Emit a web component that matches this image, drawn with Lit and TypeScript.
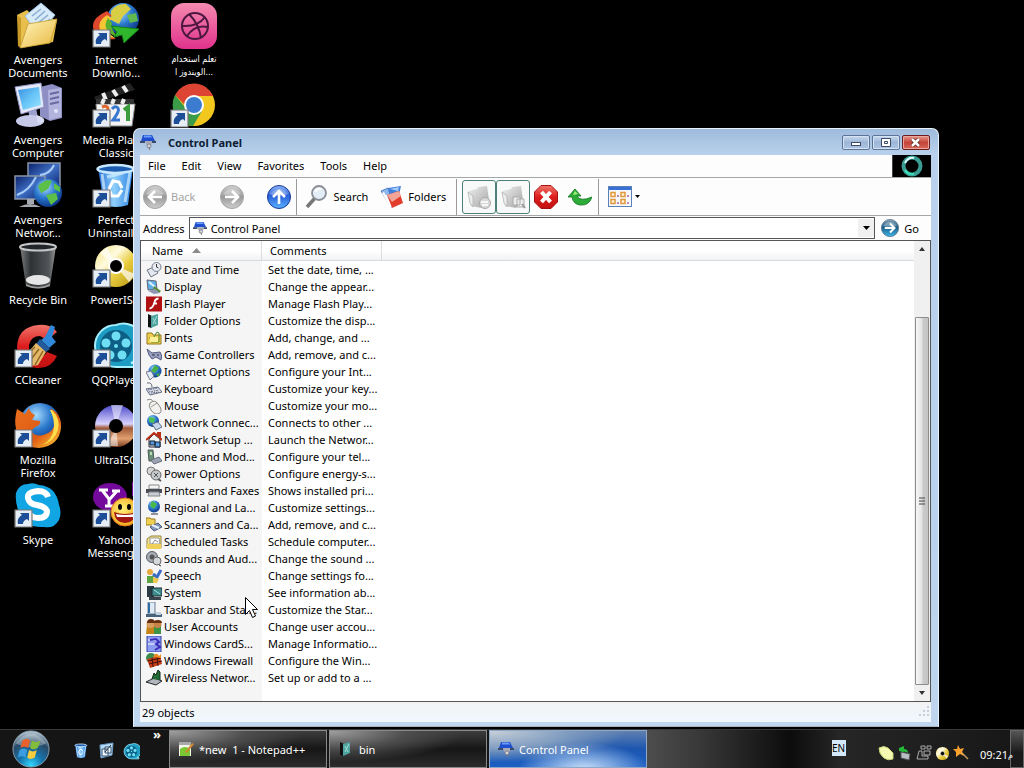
import { LitElement, html, svg, css, nothing } from "lit";
import { customElement } from "lit/decorators.js";

const defs = html`<svg class="defs" width="0" height="0" aria-hidden="true"><defs>
  <linearGradient id="gray" x2="0" y2="1"><stop stop-color="#d2d2d2"/><stop offset=".5" stop-color="#9a9a9a"/><stop offset="1" stop-color="#cecece"/></linearGradient>
  <linearGradient id="blue" x2="0" y2="1"><stop stop-color="#8fb6f8"/><stop offset=".45" stop-color="#2a5fd8"/><stop offset="1" stop-color="#59b4ff"/></linearGradient>
  <linearGradient id="teal" x2="0" y2="1"><stop stop-color="#8fa6b4"/><stop offset=".45" stop-color="#1b5e88"/><stop offset="1" stop-color="#3fb6e6"/></linearGradient>
  <linearGradient id="red" x2="0" y2="1"><stop stop-color="#f0756a"/><stop offset=".5" stop-color="#dd1d1d"/><stop offset="1" stop-color="#c01010"/></linearGradient>
  <linearGradient id="folder" x2="1" y2="1"><stop stop-color="#fff6c0"/><stop offset="1" stop-color="#e9b83e"/></linearGradient>
  <linearGradient id="paper" x2="1" y2="1"><stop stop-color="#f0f0f0"/><stop offset="1" stop-color="#a4a4a4"/></linearGradient>
  <linearGradient id="screen" x2="1" y2="1"><stop stop-color="#3d8fe0"/><stop offset=".5" stop-color="#66c4f6"/><stop offset="1" stop-color="#9be4ff"/></linearGradient>
  <linearGradient id="night" x2="1" y2="1"><stop stop-color="#0a1f66"/><stop offset=".5" stop-color="#3f6fc4"/><stop offset="1" stop-color="#0b2370"/></linearGradient>
  <linearGradient id="pink" x2="0" y2="1"><stop stop-color="#f58ab0"/><stop offset="1" stop-color="#e0328c"/></linearGradient>
  <linearGradient id="bin" x2="1"><stop stop-color="#8a8a8a"/><stop offset=".3" stop-color="#33373a"/><stop offset=".8" stop-color="#5a5e62"/><stop offset="1" stop-color="#a8a8a8"/></linearGradient>
  <linearGradient id="can" x2="1"><stop stop-color="#1e66d0"/><stop offset=".45" stop-color="#8fd0fc"/><stop offset="1" stop-color="#2c80e0"/></linearGradient>
  <linearGradient id="cd" x2="1" y2="1"><stop stop-color="#f6e27a"/><stop offset=".35" stop-color="#fffbe0"/><stop offset=".6" stop-color="#e8cc3c"/><stop offset="1" stop-color="#b09010"/></linearGradient>
  <linearGradient id="cd2" x2="0" y2="1"><stop stop-color="#4a48c8"/><stop offset=".45" stop-color="#d8d4ff"/><stop offset=".55" stop-color="#a05a38"/><stop offset=".8" stop-color="#e0a070"/><stop offset="1" stop-color="#7a3c20"/></linearGradient>
  <radialGradient id="globe" cx=".4" cy=".3" r=".75"><stop stop-color="#a8dcff"/><stop offset=".5" stop-color="#2a78cc"/><stop offset="1" stop-color="#0a2f80"/></radialGradient>
  <radialGradient id="orb" cx=".5" cy=".95" r=".95"><stop stop-color="#30d8ff"/><stop offset=".35" stop-color="#1673ac"/><stop offset=".7" stop-color="#2a4a66"/><stop offset="1" stop-color="#c0d0dc"/></radialGradient>
  <radialGradient id="sun" cx=".4" cy=".4" r=".7"><stop stop-color="#fff27a"/><stop offset="1" stop-color="#f0a010"/></radialGradient>
  <linearGradient id="fox" x2="1" y2="1"><stop stop-color="#e8701c"/><stop offset=".6" stop-color="#e05a14"/><stop offset="1" stop-color="#ffd83c"/></linearGradient>
</defs></svg>`;

const pic = (size: number, box: number, body: unknown) =>
  html`<svg width=${size} height=${size} viewBox="0 0 ${box} ${box}" aria-hidden="true">${body}</svg>`;

const shortcut = svg`<g><path d="M1 28h17v17H1z" fill="#e6edf4" stroke="#777" stroke-width="1.2"/><path d="M4 42c-1-5 1-7 4-9l-2-2h9v8l-2-2c-3 1-4 3-4 5z" fill="#1d4f98"/></g>`;

const reel = svg`<path d="M24 3a20 20 0 1 0 0 42h21v-4h-6A20 20 0 0 0 24 3z" fill="#1d9cc4" stroke="#a4f0ff" stroke-width="2"/><circle cx="24" cy="24" r="16" fill="#0e5f86"/><g fill="#6fe0f4"><circle cx="24" cy="14" r="4.5"/><circle cx="34" cy="21" r="4.5"/><circle cx="30" cy="33" r="4.5"/><circle cx="18" cy="33" r="4.5"/><circle cx="14" cy="21" r="4.5"/><circle cx="24" cy="24" r="2"/></g>`;

const trash = svg`<path d="M6 6h35l-5 37q-12 4-24 0z" fill="url(#can)"/><path d="M10 12l4 28M38 10l-5 30M15 15l16-4" stroke="#d4f0ff" stroke-width="3" fill="none" opacity=".7"/><ellipse cx="23.500" cy="7" rx="18" ry="4" fill="#1c5cb0" stroke="#c8e8ff" stroke-width="2.500"/><path d="M17 27l4-8 6 1 3 6M17 27l3 7h6l4-6" fill="none" stroke="#fff" stroke-width="3"/>`;

const panel = svg`<path d="M3 1h9l3 6H1z" fill="#1f4fd0"/><path d="M4 1.500h7l1 2H4z" fill="#6c9cf8"/><path d="M0 7h5v2H0zM12 7h4v2h-4z" fill="#3a4a68"/><path d="M5 7h7v3l-2 2H7z" fill="#a8aab4"/><circle cx="9" cy="12" r="2" fill="#d4d4dc" stroke="#6b6b7a" stroke-width=".7"/><path d="M9 13l1 3" stroke="#777"/>`;

const desk: Record<string, unknown> = {
  docs: svg`<path d="M3 13l10-5 4 4 26 6-4 22-32 6z" fill="#e8bf4c"/><path d="M11 14L27 1l14 12-16 20z" fill="#d7eaf9" stroke="#9abede"/><path d="M18 14l9-7M21 18l10-9M24 21l10-8M27 25l9-8" stroke="#86acd0" stroke-width="1.500"/><path d="M3 13l4 3 0 30-3-2z" fill="#c89a28"/><path d="M6 46l8-24 29-5-7 24z" fill="url(#folder)" stroke="#c49b30" stroke-width=".8"/>`,
  pc: svg`<path d="M26 5l12-3 10 4v30l-12 3-10-5z" fill="#8e8fc4"/><path d="M34 8l13-2v29l-12 3z" fill="#b3b4de"/><path d="M36 12l9-2M36 17l9-2M36 22l9-2" stroke="#686aa0" stroke-width="2"/><circle cx="42" cy="29" r="2" fill="#e0e2ff"/><path d="M14 28l8-2 2 10-8 1z" fill="#9ba0ce"/><ellipse cx="16" cy="39" rx="14" ry="6" fill="#c6cae8"/><path d="M22 33q10 2 8 7l-6 2z" fill="#d8dcf4"/><path d="M1 5l26-4 3 24-23 7z" fill="#e4e8f8" stroke="#9095c2"/><path d="M4 8l21-3 2 18-18 5z" fill="url(#screen)"/>`,
  net: svg`<path d="M14 1h32v24H14z" fill="url(#night)" stroke="#8a95a8" stroke-width="1.500"/><path d="M1 14h30v23H1z" fill="url(#night)" stroke="#8a95a8" stroke-width="1.500"/><path d="M3 33Q15 29 22 15M26 13Q36 12 40 3" stroke="#a9cdf8" stroke-width="2" fill="none"/><path d="M13 37h7v5H13zM5 45q11-6 22 0z" fill="#a5a9b0"/><circle cx="34" cy="31" r="14" fill="url(#globe)"/><path d="M24 24q8-8 14-5l-4 8-7 4zM32 33l10-2 2 6-7 6zM40 21l6 4v5l-6-3z" fill="#5cbf48"/>`,
  bin: svg`<path d="M6 4h36l-6 40q-12 5-24 0z" fill="url(#bin)" opacity=".9"/><ellipse cx="24" cy="5" rx="18" ry="3.500" fill="#22262a" stroke="#c4c6c8" stroke-width="2"/><ellipse cx="24" cy="38" rx="12" ry="5" fill="#e6e6e6"/><path d="M12 42q12 6 24 0v2q-12 5-24 0z" fill="#9a9a9a"/>`,
  cc: svg`<path d="M43 10Q36 1 24 3 4 5 3 25q1 19 20 21 14 1 20-12l-10-4q-4 7-11 5-8-3-7-12 2-9 11-9l7 4z" fill="url(#red)"/><path d="M31 15l6-12 4 2-3 10 4 5-7 6-8-8z" fill="#3088d8"/><path d="M26 17l10 10-4 3-10-8z" fill="#245a9c"/><path d="M22 21l10 9-8 13q-12 3-20-9 11-3 18-13z" fill="#e4b868"/><path d="M21 25L9 36M25 27L15 40M29 29l-8 14" stroke="#8c6425" stroke-width="1.500"/>`,
  fox: svg`<circle cx="26" cy="21" r="20" fill="url(#globe)"/><path d="M3 7l8 5 4-6q1 5 6 7l-3 5 8 1q1 4-5 6l-4 4q4 6 12 4 12-3 12-15 0-7-5-12 12 6 11 20-2 18-22 20Q5 45 2 27 0 18 3 7z" fill="url(#fox)"/><path d="M38 8q9 9 6 20-4 12-16 15 12-6 12-20 0-7-4-15z" fill="#ffe04c"/>`,
  skype: svg`<path d="M14 2q5-2 11 1 17 1 20 20 3 8 0 15-5 9-15 7Q8 46 4 28 1 19 2 11 5 2 14 2z" fill="#12a5e4"/><path d="M34 15q-2-6-10-6-11 1-10 7 1 6 9 7 9 2 10 6 0 7-9 7-8 0-10-7" fill="none" stroke="#fff" stroke-width="6"/>`,
  idm: svg`<circle cx="31" cy="17" r="16" fill="url(#globe)"/><path d="M19 9q6-8 15-7l5 5-8 7-4 8-8-4z" fill="#d8ce45"/><path d="M35 13l9-2 2 8-8 2z" fill="#60b850"/><path d="M15 9Q-3 17 2 29q6 10 22 8-13-6-11-16 1-6 7-7z" fill="#df482c"/><path d="M15 13Q5 19 8 28q4 7 15 8-10-7-8-14 2-4 6-5z" fill="#f4c634"/><path d="M16 16q-5 7 0 13 4 5 10 6-8-8-6-14z" fill="#58b030"/><path d="M19 24l28 3-15 14-2-8-8 2 3-5z" fill="#2fb62d" stroke="#128016"/>`,
  mpc: svg`<path d="M4 22h39l-3 22H6z" fill="#f4f4f4" stroke="#888"/><path d="M2 15L38 1l5 7L5 20z" fill="#222"/><path d="M11 11l3 7M21 8l4 6M31 4l4 6" stroke="#eee" stroke-width="4"/><path d="M4 17h38v5H4z" fill="#333"/><path d="M12 17l-2 5M22 17l-2 5M32 17l-2 5" stroke="#eee" stroke-width="4"/><path d="M10 25q6-2 6 2-1 3-4 4 5 0 4 5-2 4-7 2" fill="none" stroke="#e0672c" stroke-width="3"/><path d="M20 27q3-4 6-1 2 3-5 12h7" fill="none" stroke="#3a78d0" stroke-width="3"/><path d="M32 28l4-3v14" fill="none" stroke="#3c9c3c" stroke-width="4"/>`,
  trash,
  power: svg`<circle cx="24" cy="24" r="21" fill="url(#cd)"/><path d="M24 24L8 11l7-6zM24 24l19 8-6 8z" fill="#fff" opacity=".7"/><circle cx="24" cy="24" r="7" fill="#000" stroke="#fff" stroke-width="2"/>`,
  reel,
  ultra: svg`<circle cx="24" cy="24" r="21" fill="url(#cd2)"/><path d="M24 24L19 3h12zM24 24l-8 20h10z" fill="#fff" opacity=".5"/><circle cx="24" cy="24" r="7" fill="#000"/>`,
  yahoo: svg`<ellipse cx="18" cy="15" rx="17" ry="14" fill="#740a9c"/><path d="M40 0h5l-1 14h-4z" fill="#7a0d9e"/><path d="M7 8h9M10 8l7 9M20 9h8M25 9l-8 9v6M13 24h9" stroke="#fff" stroke-width="3" fill="none"/><circle cx="33" cy="30" r="14" fill="url(#sun)" stroke="#e07818"/><ellipse cx="28" cy="25" rx="2" ry="3"/><ellipse cx="37" cy="25" rx="2" ry="3"/><path d="M22 30q11 4 22 0-1 11-11 11T22 30z" fill="#a01810"/><path d="M24 32q9 2 18 0l-1 3H25z" fill="#fff"/>`,
  ball: svg`<rect x="1" y="1" width="46" height="46" rx="13" fill="url(#pink)"/><g fill="none" stroke="#4d1840" stroke-width="2"><circle cx="25" cy="24" r="13"/><path d="M19 12q10 10 12 24M12 24q16 1 23-9M17 34q8-12 21-9"/></g>`,
  chrome: svg`<circle cx="24" cy="23" r="21" fill="#f3c81e"/><path d="M5 13A21 21 0 0 1 43 14H24q-8 1-9 9z" fill="#dd4433"/><path d="M5 13q-6 13 3 23 6 7 15 8l9-15q-10 7-17-4z" fill="#3a9c48"/><circle cx="24" cy="23" r="10" fill="#fff"/><circle cx="24" cy="23" r="8" fill="#3c7cd0"/>`,
};

const small: Record<string, unknown> = {
  date: svg`<path d="M1 8l7-3 4 6-7 4z" fill="#e4e8ee" stroke="#6b7484"/><circle cx="10.500" cy="5" r="4.500" fill="#e9edf3" stroke="#727c8c"/><path d="M10.500 2v3l2 1" stroke="#333" fill="none"/>`,
  display: svg`<path d="M1 1l9 1 1 8-9 1z" fill="#5fb0e8" stroke="#667"/><path d="M3 3l6 5" stroke="#dff4ff" stroke-width="2"/><path d="M8 7l7 5-2 2-6-4z" fill="#5d8c38"/><path d="M2 12l7-2 5 4-6 1z" fill="#8e97b4"/>`,
  flash: svg`<rect width="16" height="15" y=".5" fill="#b01012"/><path d="M12.500 2.500q-3 0-4 3.500l-1 3Q6 12.500 3.500 12.500M7.500 7.500H11" stroke="#fff" stroke-width="1.800" fill="none"/>`,
  folderopt: svg`<path d="M2 1l4 2v12l-4-1z" fill="#111"/><path d="M5 3l7-2v11l-7 3z" fill="#4ea4a0"/><path d="M7 5l3 6M11 3l-4 8" stroke="#a4dcd4"/>`,
  fonts: svg`<path d="M1 3h5l1 2h8v9H1z" fill="#f0cf50" stroke="#947820"/><path d="M5 12l6-10 2 1v9zM3 8h9" stroke="#4c8a2c" fill="none"/><path d="M4 7h8v5H4z" fill="#fff09a"/>`,
  game: svg`<path d="M1 2l5 4 8-1q3 4 1 8l-5-3-4 2-3-4z" fill="#9aa0c4" stroke="#565c80"/><path d="M6 8h3M11 8h2" stroke="#333"/>`,
  inet: svg`<circle cx="9" cy="7" r="6.500" fill="url(#globe)"/><path d="M9 1l4 3-4 5-4-2zM10 10l4-1-2 4z" fill="#48b048"/><path d="M0 8l5-1 3 5-4 4z" fill="#e1ecf8" stroke="#778"/>`,
  keys: svg`<path d="M1 2q5-1 5 4" fill="none" stroke="#667"/><path d="M0 8l12-2 4 5-12 3z" fill="#dfe2ec" stroke="#606880"/><path d="M2 9l10-2M3 11l10-2M5 12l8-1" stroke="#555c78" stroke-dasharray="1.500 1"/>`,
  mouse: svg`<path d="M1 2q5-2 6 2" fill="none" stroke="#888"/><path d="M4 5q5-4 8 1 5 6 2 9-5 3-9-3-3-4-1-7z" fill="#f4f2ee" stroke="#8a8680"/><path d="M5 9l6-4" stroke="#999"/>`,
  netconn: svg`<circle cx="7" cy="6" r="6" fill="url(#globe)"/><path d="M3 2l6 1-1 5-5-1z" fill="#4abf58"/><path d="M6 9l6-2 4 5-6 3z" fill="#c4d4ea" stroke="#5c6c88"/>`,
  netsetup: svg`<path d="M3 7v8h11V7L8 2z" fill="#f4f4f4" stroke="#223"/><path d="M0 8l8-7 4 3V1h2v5l2 2" fill="none" stroke="#b83018" stroke-width="2"/><path d="M4 9h5v4H4zM9 10h5v5H9z" fill="#5b9be0" stroke="#123"/>`,
  phone: svg`<path d="M2 1h5l1 11H3z" fill="#6c8f7c" stroke="#4c5c54"/><path d="M4 3h2v3H4z" fill="#b8e0a8"/><path d="M5 11l8-3 3 4-8 3z" fill="#9ca4b4" stroke="#666e80"/>`,
  powero: svg`<circle cx="5" cy="5" r="4" fill="#d4d4d4" stroke="#777"/><circle cx="10" cy="9" r="5" fill="#c4c8cc" stroke="#666"/><path d="M8 7l4 4M12 7l-4 4" stroke="#555"/><path d="M12 13l3 2" stroke="#555" stroke-width="2"/>`,
  print: svg`<path d="M3 2h10v4H3z" fill="#f4f4f4" stroke="#888"/><path d="M0 6h16v4H0z" fill="#484c54"/><path d="M3 9h10l1 4H2z" fill="#c8ccd4" stroke="#888"/>`,
  region: svg`<circle cx="8" cy="6.500" r="6" fill="url(#globe)"/><path d="M6 1l5 3-3 5-4-3z" fill="#48b84c"/><path d="M5 14h7" stroke="#8e939c" stroke-width="2"/>`,
  scan: svg`<path d="M0 1h4l1 1h4v6H0z" fill="#f0d050" stroke="#9c7c1c"/><path d="M4 10l8-4 4 4-8 4z" fill="#8498bc" stroke="#4c5878"/><path d="M6 8l7 3" stroke="#e8f0ff" stroke-width="2"/>`,
  sched: svg`<path d="M1 5l4-3h10v12H1z" fill="#f4e490" stroke="#94843c"/><path d="M4 4h9l1 6H4z" fill="#fff" stroke="#999"/><path d="M6 10l3-4 3 2" stroke="#888" fill="none"/><path d="M1 10h14v5H1z" fill="#efd15a"/>`,
  sound: svg`<circle cx="6" cy="6" r="5.500" fill="#a8acb4" stroke="#585c64"/><circle cx="6" cy="6" r="2.500" fill="#555"/><circle cx="11" cy="10" r="4" fill="#d4d8dc" stroke="#666"/><path d="M13 14l2 1" stroke="#333"/>`,
  speech: svg`<circle cx="4" cy="4" r="3" fill="#e8a83c"/><path d="M1 8h7v7H1z" fill="#5ca444"/><path d="M7 6l4 3 4-7" stroke="#3c6cc4" stroke-width="3" fill="none"/><path d="M7 9l6 2-2 4H7z" fill="#f0c850"/>`,
  system: svg`<path d="M1 1h7v11H1z" fill="#2c3c44"/><path d="M6 3h10v8H6z" fill="#3f8c8c" stroke="#1c2830"/><path d="M8 5l6 4" stroke="#a4e0dc"/><path d="M3 12h12v3H3z" fill="#39454c"/>`,
  taskbar: svg`<path d="M2 0h7v12H2z" fill="#dfeaf4" stroke="#6c7c94"/><path d="M2 1h2v10H2z" fill="#2c6ca4"/><path d="M0 12h16v3H0z" fill="#48647c"/><path d="M10 10h5v3h-5z" fill="#c4d0dc"/>`,
  users: svg`<path d="M1 6h7v9H0z" fill="#c48418"/><path d="M8 7h7v8H8z" fill="#3c9448"/><circle cx="4.500" cy="5" r="4" fill="#d8a060"/><circle cx="11.500" cy="5" r="4" fill="#c88448"/><path d="M1 4q0-4 4-4t4 4zM8 4q0-3 4-3t4 3z" fill="#653010"/>`,
  card: svg`<path d="M1 0h14v16H1z" fill="#8c9cf0" stroke="#3440a8"/><path d="M2 4h9M2 8h9" stroke="#fff"/><path d="M4 4l6-1 3 3-3 2 4 3-5 3" fill="none" stroke="#3a2cb8" stroke-width="2"/>`,
  wall: svg`<circle cx="5" cy="5" r="5" fill="#3c8c50"/><path d="M1 6l13-3 2 8-12 4z" fill="#c43c18"/><path d="M2 8l13-3M3 11l13-3M6 5l1 9M11 4l1 9" stroke="#401008"/><path d="M7 4q3-6 6-1l2-2v4z" fill="#f08820"/>`,
  wifi: svg`<path d="M0 12l8-4 8 3-6 4z" fill="#b0b6bc" stroke="#20282c"/><path d="M6 9l2-6 2 2 2-5 2 2v8" fill="#226a34" stroke="#102c18"/>`,
};

const rows: [string, string, string][] = [
  ["date", "Date and Time", "Set the date, time, ..."],
  ["display", "Display", "Change the appear..."],
  ["flash", "Flash Player", "Manage Flash Play..."],
  ["folderopt", "Folder Options", "Customize the disp..."],
  ["fonts", "Fonts", "Add, change, and ..."],
  ["game", "Game Controllers", "Add, remove, and c..."],
  ["inet", "Internet Options", "Configure your Int..."],
  ["keys", "Keyboard", "Customize your key..."],
  ["mouse", "Mouse", "Customize your mo..."],
  ["netconn", "Network Connec...", "Connects to other ..."],
  ["netsetup", "Network Setup ...", "Launch the Networ..."],
  ["phone", "Phone and Mod...", "Configure your tel..."],
  ["powero", "Power Options", "Configure energy-s..."],
  ["print", "Printers and Faxes", "Shows installed pri..."],
  ["region", "Regional and La...", "Customize settings..."],
  ["scan", "Scanners and Ca...", "Add, remove, and c..."],
  ["sched", "Scheduled Tasks", "Schedule computer..."],
  ["sound", "Sounds and Aud...", "Change the sound ..."],
  ["speech", "Speech", "Change settings fo..."],
  ["system", "System", "See information ab..."],
  ["taskbar", "Taskbar and Star...", "Customize the Star..."],
  ["users", "User Accounts", "Change user accou..."],
  ["card", "Windows CardS...", "Manage Informatio..."],
  ["wall", "Windows Firewall", "Configure the Win..."],
  ["wifi", "Wireless Networ...", "Set up or add to a ..."],
];

interface Shortcut { icon: string; lines: string[]; link?: boolean; arabic?: boolean }

const shortcuts: Shortcut[] = [
  { icon: "docs", lines: ["Avengers", "Documents"] },
  { icon: "pc", lines: ["Avengers", "Computer"] },
  { icon: "net", lines: ["Avengers", "Networ..."] },
  { icon: "bin", lines: ["Recycle Bin"] },
  { icon: "cc", lines: ["CCleaner"], link: true },
  { icon: "fox", lines: ["Mozilla", "Firefox"], link: true },
  { icon: "skype", lines: ["Skype"], link: true },
  { icon: "idm", lines: ["Internet", "Downlo..."], link: true },
  { icon: "mpc", lines: ["Media Player", "Classic"], link: true },
  { icon: "trash", lines: ["Perfect", "Uninstaller"], link: true },
  { icon: "power", lines: ["PowerISO"], link: true },
  { icon: "reel", lines: ["QQPlayer"], link: true },
  { icon: "ultra", lines: ["UltraISO"], link: true },
  { icon: "yahoo", lines: ["Yahoo!", "Messenger"], link: true },
  { icon: "ball", lines: ["تعلم استخدام", "الويندوز ا..."], arabic: true },
  { icon: "chrome", lines: [], link: true },
];

const circle = (fill: string, edge: string, d: string) =>
  svg`<circle cx="12" cy="12" r="11.500" fill="url(#${fill})" stroke=${edge}/><path d="M3 9q9-10 18 0-9 4-18 0z" fill="#fff" opacity=".3"/><path d=${d} fill="none" stroke="#fff" stroke-width="2.600"/>`;

@customElement("app-root")
export class AppRoot extends LitElement {
  static styles = css`
    :host { display: flex; flex-direction: column; height: 100vh; overflow: hidden; background: #000;
      font: 11px/13px "Noto Sans", "DejaVu Sans", sans-serif; color: #000; cursor: default; }
    * { box-sizing: border-box; }
    svg { display: block; flex: none; }
    .defs { position: absolute; }
    button { font: inherit; color: inherit; background: none; border: 0; padding: 0; margin: 0;
      display: flex; align-items: center; white-space: nowrap; }
    .desktop { flex: 1; min-height: 0; position: relative; }
    .icons { display: grid; grid-auto-flow: column; grid-template-rows: repeat(7, 80px);
      grid-auto-columns: 76px; column-gap: 2px; }
    .icon { flex-direction: column; color: #fff; gap: 3px; padding-top: 2px; line-height: 13px; min-width: 0; }
    .icon .ar { font-family: "DejaVu Sans Condensed", "DejaVu Sans", sans-serif; font-size: 9px; }
    .window { position: absolute; inset: 128px 85px 2px 133px; display: flex; flex-direction: column;
      padding: 0 7px 4px 6px; border-radius: 7px 7px 0 0; border: 1px solid #e8f2fc; border-bottom-color: #a8b0bc;
      background: linear-gradient(#9fbbdc, #b9d1ec 26px, #b8d1ee 60%, #c0d6ee); }
    .title { height: 26px; display: flex; align-items: center; padding-right: 1px; flex: none; }
    .title h1 { font: bold 11px/13px "Noto Sans", sans-serif; margin: 0 auto 0 12px; color: #0c1c34; }
    .caps { display: flex; gap: 2px; }
    .cap { width: 28px; height: 15px; border: 1px solid #5b7396; border-radius: 2px; justify-content: center;
      background: linear-gradient(#c6d8ee, #9db6d8 50%, #aec6e4); box-shadow: inset 0 0 0 1px #d4e2f2; }
    .close { border-color: #6b1d1d; background: linear-gradient(#e8998c, #c4443a 50%, #d8675a); box-shadow: inset 0 0 0 1px #e9a79e; }
    .body { flex: 1; min-height: 0; background: #fdfdfd; display: flex; flex-direction: column; }
    .menu { display: flex; height: 23px; border-bottom: 1px solid #a6a6a6; padding-left: 8px; gap: 16px; flex: none; }
    .menu button { padding-bottom: 2px; }
    .throbber { margin-left: auto; width: 39px; background: #000; border-left: 1px solid #444; display: flex; justify-content: center; align-items: center; }
    .tools { display: flex; align-items: center; height: 38px; border-bottom: 1px solid #a6a6a6; padding-left: 3px; flex: none; }
    .tool { gap: 4px; }
    .back { color: #a4a4a4; margin-right: 25px; }
    .up { margin: 0 5px 0 23px; }
    .sep { width: 1px; height: 36px; background: #9a9a9a; }
    .search { margin: 0 12px 0 8px; }
    .folders { margin-right: 10px; }
    .boxed { width: 34px; height: 34px; border: 1px solid #4c8078; border-radius: 3px; justify-content: center; background: #f8faf9; }
    .sep + .boxed { margin-left: 5px; }
    .stop { margin-left: 4px; }
    .undo { margin: 0 6px 0 10px; }
    .views { margin-left: 9px; gap: 3px; }
    .address { display: flex; align-items: center; height: 24px; flex: none; padding-left: 3px; }
    .combo { flex: 1; display: flex; align-items: center; height: 22px; margin: 0 6px 0 4px; padding-left: 3px;
      border: 1px solid #555; background: #fff; }
    .combo input { flex: 1; min-width: 0; border: 0; outline: 0; padding: 0 0 0 4px; font: inherit; color: inherit; background: none; height: 18px; }
    .drop { width: 16px; height: 18px; background: #f0f0f0; justify-content: center; }
    .go { gap: 5px; margin-right: 12px; }
    .list { flex: 1; min-height: 0; display: flex; border: 1px solid #555; background: #fff; overflow: hidden; }
    .grid { flex: 1; min-width: 0; background: linear-gradient(#f5f5f5, #f5f5f5) 0 0 / 121px 100% no-repeat #fff; }
    table { width: 100%; table-layout: fixed; border-collapse: separate; border-spacing: 0; }
    th, td { padding: 0; text-align: left; font-weight: normal; white-space: nowrap; }
    thead th { height: 20px; background: linear-gradient(#fff 50%, #f1f3f4); border-bottom: 1px solid #d8dadc; }
    th.first { width: 121px; border-right: 1px solid #dcdcdc; padding-left: 11px; }
    th.second { width: 120px; border-right: 1px solid #dcdcdc; padding-left: 8px; }
    .sort { display: flex; align-items: center; gap: 9px; }
    td { height: 17px; padding-left: 6px; }
    .name { display: flex; align-items: center; gap: 2px; height: 17px; padding-left: 5px; }
    .bar { width: 16px; display: flex; flex-direction: column; background: #f0f0f0; flex: none; }
    .arrow { height: 16px; justify-content: center; }
    .track { flex: 1; display: flex; flex-direction: column; justify-content: flex-end; }
    .thumb { height: 86%; width: 14px; margin-left: 1px; border: 1px solid #8c8c8c; border-radius: 1px; justify-content: center;
      background: linear-gradient(90deg, #f6f6f6, #e6e6e6 45%, #cacaca 60%, #c4c4c4); }
    .status { height: 20px; flex: none; display: flex; align-items: center; justify-content: space-between; padding-left: 2px;
      background: linear-gradient(#f2f2f2, #f0f8fe); }
    .pointer { position: absolute; left: 245px; top: 597px; }
    .taskbar { height: 39px; flex: none; display: flex; align-items: stretch; color: #fff;
      background: linear-gradient(90deg, #151515 0 560px, #505050 640px, #383838 700px, #0c0c0c 790px, #262626 840px, #161616); border-top: 1px solid #3a3a3a; }
    .start { margin-left: 10px; width: 42px; justify-content: center; }
    .quick { display: flex; gap: 8px; align-items: center; margin-left: 21px; padding-top: 4px; }
    .more { margin: 0 8px 0 13px; align-items: flex-start; font-weight: bold; font-size: 13px; line-height: 9px; }
    .tasks { display: flex; gap: 2px; }
    .task { width: 158px; border: 1px solid #8a8a8a; padding-left: 8px; gap: 5px;
      background: radial-gradient(ellipse at 0 0, #a0a0a0, #4c4c4c 35%, transparent 62%), linear-gradient(#3c3c3c, #161616 50%, #2c2c2c); }
    .active { background: radial-gradient(ellipse at 60% 110%, #d0e6fc, transparent 50%), radial-gradient(ellipse at 0 0, #c8d0d8, #7f9cc0 35%, transparent 62%), linear-gradient(#5f80b0, #1c56b0 50%, #1c60c4); border-color: #8fa8c8; }
    .lang { margin: 10px 0 0 auto; height: 16px; width: 14px; background: #d4e8f8; color: #000; overflow: hidden; font-size: 10px; line-height: 16px; }
    .tray { display: flex; gap: 3px; align-items: center; margin-left: 32px; padding-top: 8px; }
    .clock { padding-top: 11px; margin-left: 11px; display: flex; align-items: center; white-space: nowrap; position: relative; z-index: 1; }
    .clock small { font-size: 8px; }
    .show { width: 14px; border: 1px solid #666; background: linear-gradient(#555, #1a1a1a 60%); margin-left: -3px; }
  `;

  private icon(s: Shortcut) {
    return html`<button class="icon">
      ${pic(48, 48, svg`${desk[s.icon]}${s.link ? shortcut : nothing}`)}
      <span class=${s.arabic ? "ar" : "label"}>${s.lines.map((l, i) => html`${i ? html`<br>` : nothing}${l}`)}</span>
    </button>`;
  }

  render() {
    return html`${defs}
    <main class="desktop">
      <div class="icons">${shortcuts.map((s) => this.icon(s))}</div>
      <section class="window">
        <header class="title">
          ${pic(16, 16, panel)}
          <h1>Control Panel</h1>
          <div class="caps">
            <button class="cap" aria-label="Minimize"><svg width="12" height="9"><rect x="1.500" y="4.500" width="9" height="3" fill="#fff" stroke="#3c4c68"/></svg></button>
            <button class="cap" aria-label="Maximize"><svg width="12" height="9"><path d="M1.500.5h9v8h-9zM4.500 3.500h3v2h-3z" fill="#fff" stroke="#3c4c68"/></svg></button>
            <button class="cap close" aria-label="Close"><svg width="12" height="9"><path d="M2 1l7 7M9 1L2 8" stroke="#5a2020" stroke-width="4"/><path d="M2 1l7 7M9 1L2 8" stroke="#fff" stroke-width="2.500"/></svg></button>
          </div>
        </header>
        <div class="body">
          <nav class="menu">
            ${["File", "Edit", "View", "Favorites", "Tools", "Help"].map((m) => html`<button>${m}</button>`)}
            <div class="throbber"><svg width="24" height="22"><circle cx="12" cy="11" r="8.500" fill="none" stroke="#3b9c94" stroke-width="4"/><path d="M5 8q3-6 9-5" stroke="#dff" stroke-width="2" fill="none"/><path d="M5 15q3 5 9 4" stroke="#3fe0b8" stroke-width="2" fill="none"/></svg></div>
          </nav>
          <div class="tools">
            <button class="tool back">${pic(24, 24, circle("gray", "#a4a4a4", "M19 12H6M12 6l-6 6 6 6"))}Back</button>
            <button class="tool" aria-label="Forward">${pic(24, 24, circle("gray", "#a4a4a4", "M5 12h13M12 6l6 6-6 6"))}</button>
            <button class="tool up" aria-label="Up">${pic(24, 24, circle("blue", "#173a94", "M12 19V6M6 12l6-6 6 6"))}</button>
            <span class="sep"></span>
            <button class="tool search">${pic(24, 24, svg`<path d="M2 22l8-9" stroke="#777" stroke-width="3.500"/><circle cx="14" cy="8" r="7" fill="#e3edf6" stroke="#8a8e96" stroke-width="1.800"/><path d="M10 7q2-4 6-3" stroke="#fff" stroke-width="2" fill="none"/>`)}Search</button>
            <button class="tool folders">${pic(24, 24, svg`<path d="M1 6l7-3 6 17-3 3z" fill="#8cb8ee" stroke="#3c6cb8" stroke-width=".8"/><path d="M2 8l2-1 8 14-2 2z" fill="#fff"/><path d="M8 3l13-2-2 9-9 3z" fill="#3f80dc"/><path d="M10 4l9-2-1 4z" fill="#a8ccf8"/><path d="M7 10l12-4 4 12-11 5z" fill="#e23c2c"/><path d="M7 10l12-4 2 5-9 6z" fill="#f3a498"/><path d="M6 10l5 13" stroke="#fff" stroke-width="1.500"/>`)}Folders</button>
            <span class="sep"></span>
            <button class="boxed" aria-label="Move to">${pic(26, 26, svg`<path d="M2 7l9-2 1-2 9-1 2 14-7 8-11-2z" fill="url(#paper)"/><path d="M2 8l5 4v11l-3-4z" fill="#ededed" stroke="#aaa" stroke-width=".7"/><circle cx="19" cy="19" r="5.500" fill="#d8d8d8" stroke="#aaa"/><path d="M15 18h7M16 21h6" stroke="#fff" stroke-width="1.500"/>`)}</button>
            <button class="boxed" aria-label="Copy to">${pic(26, 26, svg`<path d="M2 7l9-2 1-2 9-1 2 14-7 8-11-2z" fill="url(#paper)"/><path d="M2 8l5 4v11l-3-4z" fill="#ededed" stroke="#aaa" stroke-width=".7"/><path d="M13 13h7v8h-7zM17 15h7v8h-7z" fill="#ececec" stroke="#aaa"/><path d="M22 20l3 4" stroke="#999" stroke-width="2"/>`)}</button>
            <button class="tool stop" aria-label="Delete">${pic(24, 24, svg`<path d="M7 .5h10l6.500 6.500v10L17 23.500H7L.5 17V7z" fill="url(#red)" stroke="#a81010"/><path d="M7.500 7l9 10M16.500 7l-9 10" stroke="#fff" stroke-width="4"/>`)}</button>
            <button class="tool undo" aria-label="Undo">${pic(24, 24, svg`<path d="M7 4l6 7H9q3 6 15 1-3 9-12 8-7-1-8-8H0z" fill="#2cab38" stroke="#107420" stroke-width=".8"/><path d="M7 6l3 3-5 1z" fill="#a0f080"/>`)}</button>
            <span class="sep"></span>
            <button class="tool views" aria-label="Views"><svg width="24" height="22"><rect x=".5" y=".5" width="23" height="20" fill="#f6f8fc" stroke="#5a80b8"/><path d="M1 1h22v3H1z" fill="#3a70d4"/><g fill="#fff4d8" stroke="#e0983c" stroke-width="1.500"><path d="M3 6.500h4v4H3zM13 6.500h4v4h-4zM3 13.500h4v4H3zM13 13.500h4v4h-4z"/></g><path d="M9 10h2M19 10h2M9 17h2M19 17h2" stroke="#b060a0" stroke-width="1.500"/></svg><svg width="5" height="3"><path d="M0 0h5L2.500 3z"/></svg></button>
          </div>
          <div class="address">
            <label for="addr">Address</label>
            <div class="combo">${pic(14, 16, panel)}
              <input id="addr" value="Control Panel">
              <button class="drop" aria-label="Show addresses"><svg width="7" height="4"><path d="M0 0h7L3.500 4z"/></svg></button>
            </div>
            <button class="go">${pic(18, 24, circle("teal", "#54708a", "M5 12h13M12 6l6 6-6 6"))}Go</button>
          </div>
          <div class="list">
            <div class="grid">
              <table>
                <thead><tr>
                  <th class="first"><span class="sort">Name <svg width="9" height="5"><path d="M0 5h9L4.500 0z" fill="#8a8a8a"/></svg></span></th>
                  <th class="second">Comments</th><th></th>
                </tr></thead>
                <tbody>${rows.map(([i, n, c]) => html`<tr><th scope="row"><span class="name">${pic(16, 16, small[i])}${n}</span></th><td>${c}</td><td></td></tr>`)}</tbody>
              </table>
            </div>
            <div class="bar">
              <button class="arrow" aria-label="Scroll up"><svg width="6" height="4"><path d="M0 4h6L3 0z" fill="#333"/></svg></button>
              <div class="track"><button class="thumb" aria-label="Scroll position"><svg width="6" height="8"><path d="M0 1h6M0 4h6M0 7h6" stroke="#444"/></svg></button></div>
              <button class="arrow" aria-label="Scroll down"><svg width="6" height="4"><path d="M0 0h6L3 4z" fill="#333"/></svg></button>
            </div>
          </div>
          <footer class="status">29 objects
            <svg width="14" height="14"><path d="M10 2h2M10 6h2M6 6h2M10 10h2M6 10h2M2 10h2" stroke="#c4d0dc" stroke-width="2"/></svg>
          </footer>
        </div>
      </section>
      <svg class="pointer" width="14" height="22"><path d="M.5.500v17l4-4 3 7 3-1.500-3-6.500h5z" fill="#fff" stroke="#000"/></svg>
    </main>
    <footer class="taskbar">
      <button class="start" aria-label="Start"><svg width="40" height="38" viewBox="0 0 40 40"><circle cx="20" cy="20" r="19" fill="url(#orb)" stroke="#8aa0b0"/><path d="M4 14Q20-6 36 14q-16 8-32 0z" fill="#fff" opacity=".3"/><path d="M11 11q5-3 8 0l-2 8q-4-3-8 0z" fill="#e8602c"/><path d="M21 11q4 3 9 0l-3 8q-5 3-8 0z" fill="#84bc3c"/><path d="M8 21q5-3 8 0l-2 8q-4-3-8 0z" fill="#3c9ce0"/><path d="M18 21q4 3 8 0l-2 8q-5 3-8 0z" fill="#f8cc3c"/></svg></button>
      <div class="quick">
        <button aria-label="Perfect Uninstaller">${pic(16, 48, trash)}</button>
        <button aria-label="Show desktop">${pic(18, 18, svg`<path d="M3 3l13-2-1 12-11 3z" fill="#b8dcf4" stroke="#6c9cc8"/><path d="M5 7h6v7H5zM8 5h6v6H8z" fill="#f4faff" stroke="#34506c"/><path d="M8 10l6-7" stroke="#234"/>`)}</button>
        <button aria-label="QQPlayer">${pic(17, 48, reel)}</button>
      </div>
      <button class="more" aria-label="More">»</button>
      <div class="tasks">
        <button class="task">${pic(16, 16, svg`<path d="M1 2h12v13H1z" fill="#f4f8ec"/><path d="M1 1h12v3H1z" fill="#a8a8a8"/><path d="M2 8q5-4 10 0v7H2z" fill="#7cc834"/><path d="M7 11l7-9 2 1-7 9z" fill="#d08830"/>`)}<span>*new &nbsp;1 - Notepad++</span></button>
        <button class="task">${pic(16, 16, small.folderopt)}<span>bin</span></button>
        <button class="task active">${pic(16, 16, panel)}<span>Control Panel</span></button>
      </div>
      <span class="lang">EN</span>
      <div class="tray">
        ${pic(16, 16, svg`<path d="M1 3q5-3 9 0l5 5v6q-5 2-9-1-5-4-5-10z" fill="#f4f8b0" stroke="#c8d478"/>`)}
        ${pic(16, 16, svg`<path d="M4 7l9 2-1 6-8-2z" fill="#b8bec4" stroke="#555"/><path d="M2 3l5-2v3q4 0 4 4-3-2-5-1l-4-1z" fill="#24b838"/>`)}
        ${pic(16, 16, svg`<path d="M5 1h4v3H5zM11 1h4v3h-4zM3 6h3v5h6v3H1zM8 6h6v4H8z" fill="#222" stroke="#aaa"/>`)}
        ${pic(15, 48, desk.power)}
        ${pic(16, 16, svg`<path d="M7 6l8 8" stroke="#c8a060" stroke-width="1.500"/><path d="M5 0l2 4 4-1-2 4 2 4-4-2-4 3V7L0 4h4z" fill="#f8a030"/>`)}
      </div>
      <span class="clock" dir="ltr">09:21<small>م</small></span>
      <button class="show" aria-label="Show desktop"></button>
    </footer>`;
  }
}
